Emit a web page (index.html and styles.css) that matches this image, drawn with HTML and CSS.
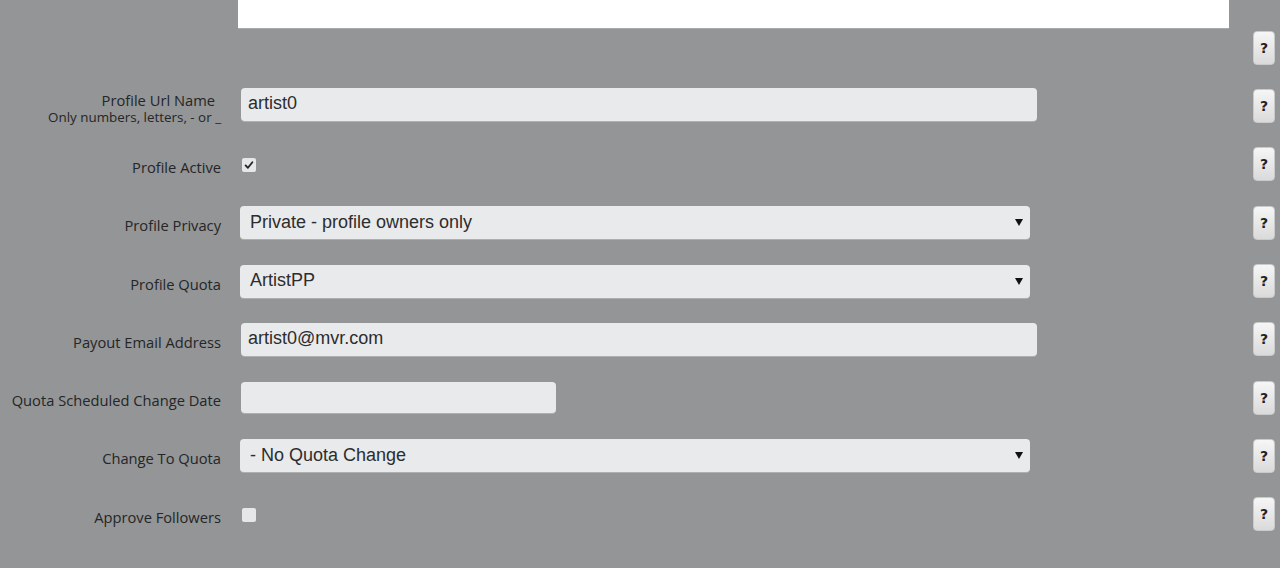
FILE: index.html
```html
<!DOCTYPE html>
<html>
<head>
<meta charset="utf-8">
<link rel="stylesheet" href="styles.css">
</head>
<body>
<div class="page">
  <div class="top-row">
    <div class="text-area"></div>
  </div>
  <div class="help-only-row">
    <span class="help">?</span>
  </div>
  <div class="form">
    <div class="row first">
      <div class="label two-line"><span>Profile Url Name</span><span class="sub">Only numbers, letters, - or _</span></div>
      <div class="field"><div class="input wide">artist0</div></div>
      <span class="help">?</span>
    </div>
    <div class="row">
      <div class="label">Profile Active</div>
      <div class="field"><span class="check checked"><svg viewBox="0 0 10 10" width="10" height="10"><path d="M1.6 5.4 L3.9 7.8 L8.4 2.2" fill="none" stroke="#222" stroke-width="1.8" stroke-linecap="round" stroke-linejoin="round"/></svg></span></div>
      <span class="help">?</span>
    </div>
    <div class="row">
      <div class="label">Profile Privacy</div>
      <div class="field"><div class="select">Private - profile owners only<svg class="caret" viewBox="0 0 8 8" width="8" height="8"><path d="M0 1 L8 1 L4 8 Z" fill="#111"/></svg></div></div>
      <span class="help">?</span>
    </div>
    <div class="row">
      <div class="label">Profile Quota</div>
      <div class="field"><div class="select">ArtistPP<svg class="caret" viewBox="0 0 8 8" width="8" height="8"><path d="M0 1 L8 1 L4 8 Z" fill="#111"/></svg></div></div>
      <span class="help">?</span>
    </div>
    <div class="row">
      <div class="label">Payout Email Address</div>
      <div class="field"><div class="input wide">artist0@mvr.com</div></div>
      <span class="help">?</span>
    </div>
    <div class="row">
      <div class="label">Quota Scheduled Change Date</div>
      <div class="field"><div class="input short"></div></div>
      <span class="help">?</span>
    </div>
    <div class="row">
      <div class="label">Change To Quota</div>
      <div class="field"><div class="select">- No Quota Change<svg class="caret" viewBox="0 0 8 8" width="8" height="8"><path d="M0 1 L8 1 L4 8 Z" fill="#111"/></svg></div></div>
      <span class="help">?</span>
    </div>
    <div class="row">
      <div class="label">Approve Followers</div>
      <div class="field"><span class="check"></span></div>
      <span class="help">?</span>
    </div>
  </div>
</div>
</body>
</html>
```
FILE: styles.css
```css
html, body {
  margin: 0;
  padding: 0;
  background: #939596;
  height: 100%;
  overflow: hidden;
}
.page {
  width: 1280px;
  font-family: "Open Sans", "Noto Sans", sans-serif;
}
.top-row {
  padding-left: 238px;
  padding-right: 51px;
}
.text-area {
  height: 29px;
  background: #ffffff;
  border-bottom: 1px solid #a8aaab;
  box-sizing: border-box;
}
.help-only-row {
  height: 48px;
  display: flex;
  justify-content: flex-end;
  align-items: flex-start;
  padding-right: 5px;
  padding-top: 2px;
  box-sizing: border-box;
}
.form {
  display: flex;
  flex-direction: column;
}
.row {
  height: 58.3px;
  display: flex;
  align-items: center;
  padding-right: 5px;
}
.row.first .field {
  margin-top: -3px;
}
.label {
  width: 221px;
  flex: none;
  text-align: right;
  font-size: 14.7px;
  color: #252627;
  padding-top: 5px;
  line-height: 18px;
}
.label.two-line {
  display: flex;
  flex-direction: column;
  align-items: flex-end;
  padding-top: 4px;
}
.label.two-line span:first-child {
  padding-right: 6px;
}
.label .sub {
  font-size: 13.4px;
  line-height: 17px;
}
.field {
  flex: 1;
  padding-left: 19px;
  display: flex;
  align-items: center;
}
.input, .select {
  box-sizing: border-box;
  height: 33px;
  background: #e9eaeb;
  border-radius: 4px;
  font-family: "Liberation Sans", Arial, sans-serif;
  font-size: 18px;
  color: #2c2d2e;
  display: flex;
  align-items: center;
  box-shadow: 0 1px 0 rgba(255,255,255,0.25);
}
.input {
  padding-left: 7px;
  margin-left: 1px;
  padding-bottom: 2px;
}
.input.wide {
  width: 796px;
}
.input.short {
  width: 315px;
  height: 31px;
}
.select {
  width: 790px;
  padding-left: 10px;
  padding-bottom: 1px;
  position: relative;
}
.caret {
  position: absolute;
  right: 7px;
  top: 12px;
}
.check {
  width: 14px;
  height: 14px;
  margin-left: 2px;
  margin-top: 2px;
  border-radius: 2px;
  background: #e6e7e8;
  display: flex;
  align-items: center;
  justify-content: center;
}
.help {
  box-sizing: border-box;
  width: 22px;
  height: 34px;
  border-radius: 4px;
  background: linear-gradient(#f6f6f6, #dadada);
  border: 1px solid #c9cacb;
  display: flex;
  align-items: center;
  justify-content: center;
  font-family: "DejaVu Sans", sans-serif;
  font-weight: bold;
  font-size: 14px;
  color: #222;
  margin-left: auto;
  flex: none;
}
```
